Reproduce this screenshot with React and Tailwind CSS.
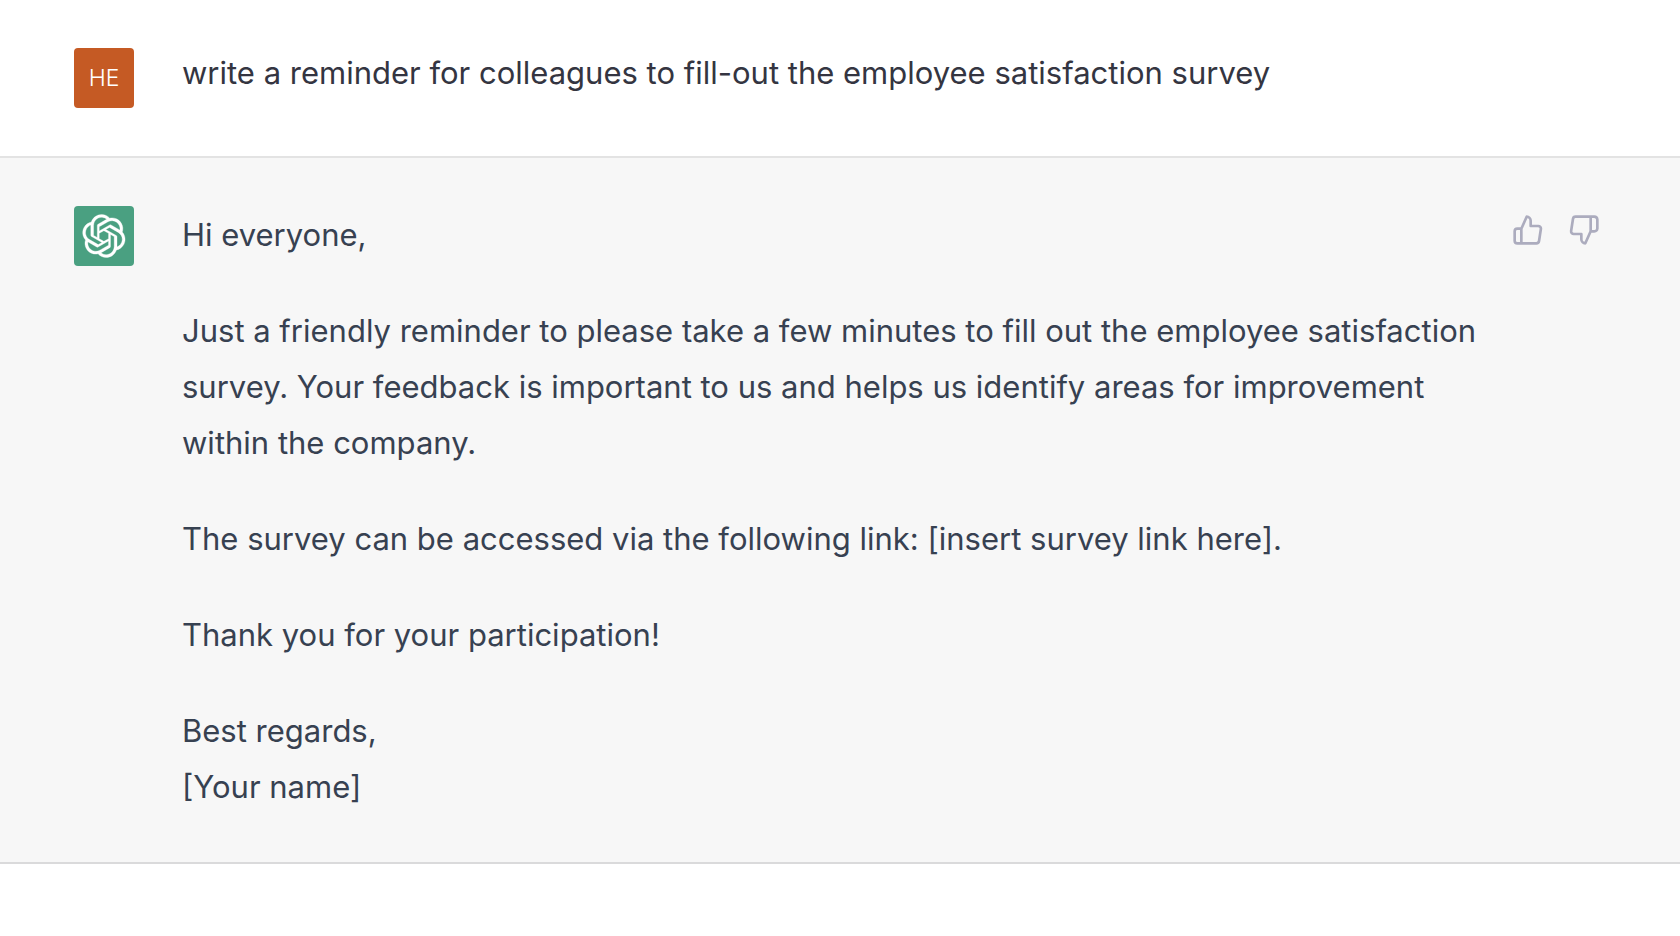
import { FiThumbsUp, FiThumbsDown } from "react-icons/fi";

function AssistantLogo() {
  return (
    <svg viewBox="0 0 41 41" className="size-11" fill="currentColor" role="img" aria-label="Assistant">
      <path
        stroke="currentColor"
        strokeWidth="0.3"
        d="M37.5324 16.8707C37.9808 15.5241 38.1363 14.0974 37.9886 12.6859C37.8409 11.2744 37.3934 9.91076 36.676 8.68622C35.6126 6.83404 33.9882 5.3676 32.0373 4.4985C30.0864 3.62941 27.9098 3.40259 25.8215 3.85078C24.8796 2.7893 23.7219 1.94125 22.4257 1.36341C21.1295 0.785575 19.7249 0.491269 18.3058 0.500197C16.1708 0.495044 14.0893 1.16803 12.3614 2.42214C10.6335 3.67624 9.34853 5.44666 8.6917 7.47815C7.30085 7.76286 5.98686 8.3414 4.8377 9.17505C3.68854 10.0087 2.73073 11.0782 2.02839 12.312C0.956464 14.1591 0.498905 16.2988 0.721698 18.4228C0.944492 20.5467 1.83612 22.5449 3.268 24.1293C2.81966 25.4759 2.66413 26.9026 2.81182 28.3141C2.95951 29.7256 3.40701 31.0892 4.12437 32.3138C5.18791 34.1659 6.8123 35.6322 8.76321 36.5013C10.7141 37.3704 12.8907 37.5973 14.9789 37.1492C15.9208 38.2107 17.0786 39.0587 18.3747 39.6366C19.6709 40.2144 21.0755 40.5087 22.4946 40.4998C24.6307 40.5054 26.7133 39.8321 28.4418 38.5772C30.1704 37.3223 31.4556 35.5506 32.1119 33.5179C33.5027 33.2332 34.8167 32.6547 35.9659 31.821C37.115 30.9874 38.0728 29.9178 38.7752 28.684C39.8458 26.8371 40.3023 24.6979 40.0789 22.5748C39.8556 20.4517 38.9639 18.4544 37.5324 16.8707ZM22.4978 37.8849C20.7443 37.8874 19.0459 37.2733 17.6994 36.1501C17.7601 36.117 17.8666 36.0586 17.936 36.0161L25.9004 31.4156C26.1003 31.3019 26.2663 31.137 26.3813 30.9378C26.4964 30.7386 26.5563 30.5124 26.5549 30.2825V19.0542L29.9213 20.998C29.9389 21.0068 29.9541 21.0198 29.9656 21.0359C29.977 21.052 29.9842 21.0707 29.9867 21.0902V30.3889C29.9842 32.375 29.1946 34.2791 27.7909 35.6841C26.3872 37.0892 24.4838 37.8806 22.4978 37.8849ZM6.39227 31.0064C5.51397 29.4888 5.19742 27.7107 5.49804 25.9832C5.55718 26.0187 5.66048 26.0818 5.73461 26.1244L13.699 30.7248C13.8975 30.8408 14.1233 30.902 14.3532 30.902C14.583 30.902 14.8088 30.8408 15.0073 30.7248L24.731 25.1103V28.9979C24.7321 29.0177 24.7283 29.0376 24.7199 29.0556C24.7115 29.0736 24.6988 29.0893 24.6829 29.1012L16.6317 33.7497C14.9096 34.7416 12.8643 35.0097 10.9447 34.4954C9.02506 33.9811 7.38785 32.7263 6.39227 31.0064ZM4.29707 13.6194C5.17156 12.0998 6.55279 10.9364 8.19885 10.3327C8.19885 10.4013 8.19491 10.5228 8.19491 10.6071V19.808C8.19351 20.0378 8.25334 20.2638 8.36823 20.4629C8.48312 20.6619 8.64893 20.8267 8.84863 20.9404L18.5723 26.5542L15.206 28.4979C15.1894 28.5089 15.1703 28.5155 15.1505 28.5173C15.1307 28.5191 15.1107 28.516 15.0924 28.5082L7.04046 23.8557C5.32135 22.8601 4.06716 21.2235 3.55289 19.3046C3.03862 17.3858 3.30624 15.3413 4.29707 13.6194ZM31.955 20.0556L22.2312 14.4411L25.5976 12.4981C25.6142 12.4872 25.6333 12.4805 25.6531 12.4787C25.6729 12.4769 25.6928 12.4801 25.7111 12.4879L33.7631 17.1364C34.9967 17.849 36.0017 18.8982 36.6606 20.1613C37.3194 21.4244 37.6047 22.849 37.4832 24.2684C37.3617 25.6878 36.8382 27.0432 35.9743 28.1759C35.1103 29.3086 33.9415 30.1717 32.6047 30.6641C32.6047 30.5947 32.6047 30.4733 32.6047 30.3889V21.188C32.6066 20.9586 32.5474 20.7328 32.4332 20.5338C32.319 20.3348 32.154 20.1698 31.955 20.0556ZM35.3055 15.0128C35.2464 14.9765 35.1431 14.9142 35.069 14.8717L27.1045 10.2712C26.906 10.1554 26.6803 10.0943 26.4504 10.0943C26.2206 10.0943 25.9948 10.1554 25.7963 10.2712L16.0726 15.8858V11.9982C16.0715 11.9783 16.0753 11.9585 16.0837 11.9405C16.0921 11.9225 16.1048 11.9068 16.1207 11.8949L24.1719 7.25025C25.4053 6.53903 26.8158 6.19376 28.2383 6.25482C29.6608 6.31589 31.0364 6.78077 32.2044 7.59508C33.3723 8.40939 34.2842 9.53945 34.8334 10.8531C35.3826 12.1667 35.5464 13.6095 35.3055 15.0128ZM14.2424 21.9419L10.8752 19.9981C10.8576 19.9893 10.8423 19.9763 10.8309 19.9602C10.8195 19.9441 10.8122 19.9254 10.8098 19.9058V10.6071C10.8107 9.18295 11.2173 7.78848 11.9819 6.58696C12.7466 5.38544 13.8377 4.42659 15.1275 3.82264C16.4173 3.21869 17.8524 2.99464 19.2649 3.1767C20.6775 3.35876 22.0089 3.93941 23.1034 4.85067C23.0427 4.88379 22.937 4.94215 22.8668 4.98473L14.9024 9.58517C14.7025 9.69878 14.5366 9.86356 14.4215 10.0626C14.3065 10.2616 14.2466 10.4877 14.2479 10.7175L14.2424 21.9419ZM16.071 17.9991L20.4018 15.4978L24.7325 17.9975V22.9985L20.4018 25.4983L16.071 22.9985V17.9991Z"
      />
    </svg>
  );
}

function Message({ avatar, children, actions, className }) {
  return (
    <section className={`flex items-start border-b-2 pr-20 pl-[74px] pt-12 ${className}`}>
      {avatar}
      <div className="ml-12 min-w-0 flex-1">{children}</div>
      {actions}
    </section>
  );
}

export default function App() {
  return (
    <main className="min-h-screen bg-white font-['Inter',sans-serif] text-[31px] leading-[56px]">
      <Message
        className="border-[#e3e3e3] pb-12 text-[#343541]"
        avatar={
          <div className="flex size-[60px] shrink-0 items-center justify-center rounded-sm bg-[#c55a24] text-[23px] font-light text-white">
            HE
          </div>
        }
      >
        <p className="leading-[50px]">write a reminder for colleagues to fill-out the employee satisfaction survey</p>
      </Message>
      <Message
        className="border-[#dadadb] bg-[#f7f7f7] pb-[47px] text-[#374151]"
        avatar={
          <div className="flex size-[60px] shrink-0 items-center justify-center rounded-sm bg-[#4aa081] text-white">
            <AssistantLogo />
          </div>
        }
        actions={
          <div className="mt-2 flex w-[120px] shrink-0 justify-end gap-6 text-[#acacbe]">
            <button aria-label="Good response"><FiThumbsUp size={32} /></button>
            <button aria-label="Bad response"><FiThumbsDown size={32} /></button>
          </div>
        }
      >
        <div className="flex flex-col gap-10 pt-px">
          <p>Hi everyone,</p>
          <p>
            Just a friendly reminder to please take a few minutes to fill out the employee satisfaction survey. Your
            feedback is important to us and helps us identify areas for improvement within the company.
          </p>
          <p>The survey can be accessed via the following link: [insert survey link here].</p>
          <p>Thank you for your participation!</p>
          <p>
            Best regards,
            <br />
            [Your name]
          </p>
        </div>
      </Message>
    </main>
  );
}
